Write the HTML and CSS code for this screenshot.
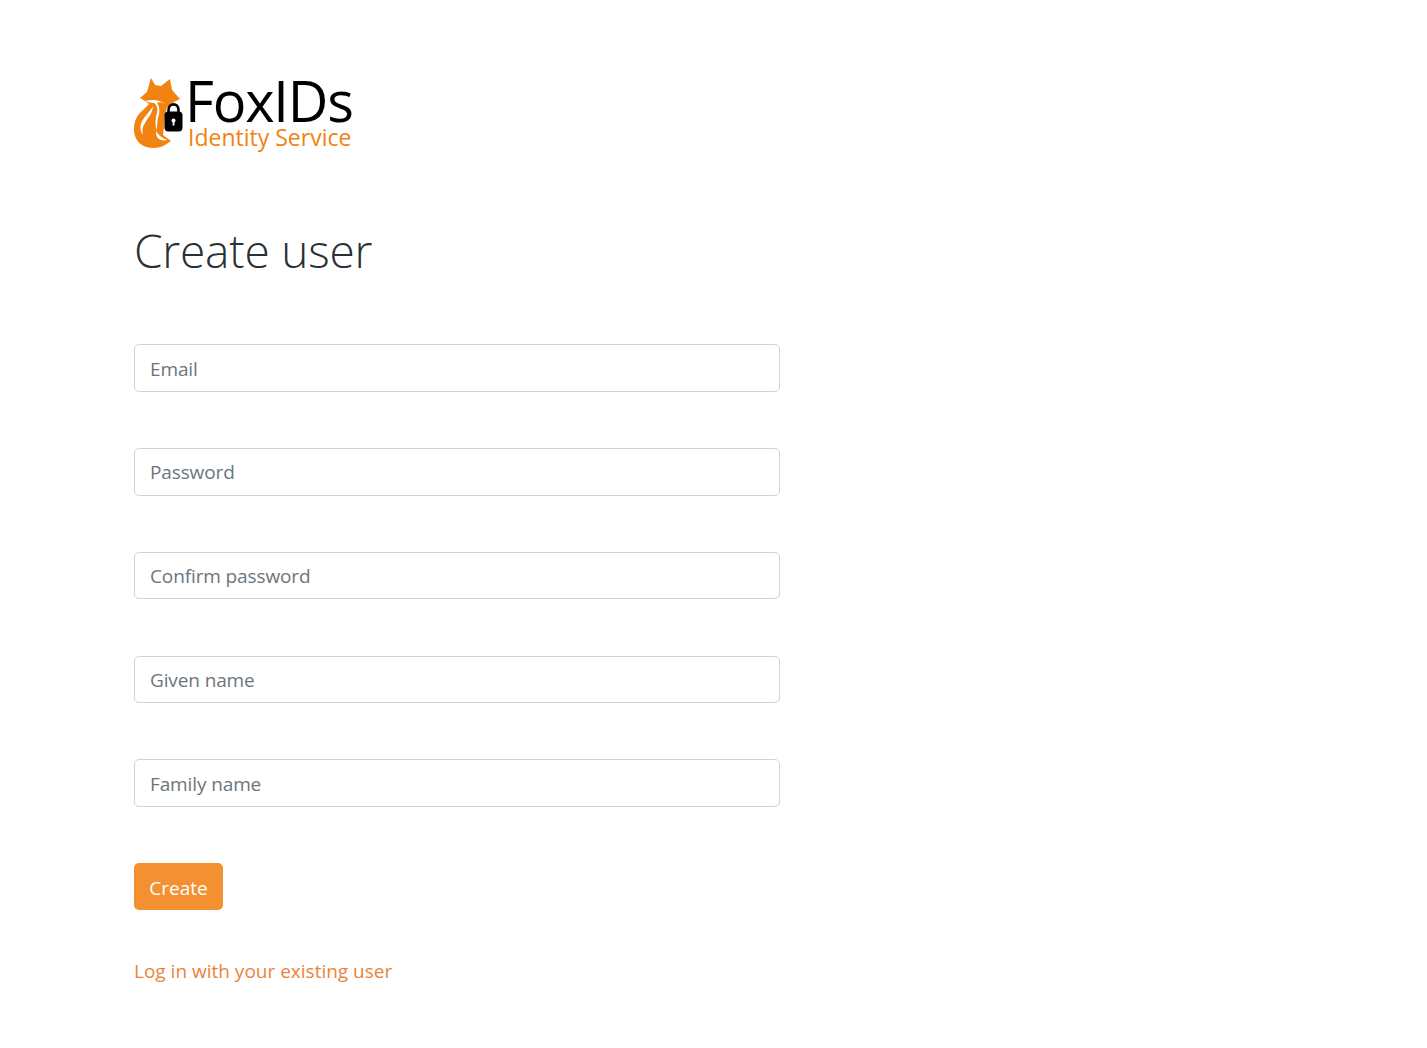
FILE: index.html
```html
<!DOCTYPE html>
<html lang="en">
<head>
 <meta charset="UTF-8">
 <meta name="viewport" content="width=device-width, initial-scale=1.0">
 <title>Create user</title>
 <link rel="stylesheet" href="styles.css">
</head>
<body>
 <div class="container">
 <header class="brand">
 <svg class="brand-icon" viewBox="0 0 50 72" width="50" height="72" aria-hidden="true">
 <path class="fox" d="M17 1 L21 8 L27 9 L36 2 L38 13 L46 22 L38 26 L33 30 L31 38 L30 50 L29 58 L37 64 L31 68 C25 72 14 72 8 68 C2 64 0 58 0 52 C0 44 3 38 9 33 L15 27 L11 24 L6 21 L13 15 Z"/>
 <path class="fox-mark" d="M11 24 C18 22 27 23 31 27 C28 25 25 25 23 26 C26 30 26 36 24 41 C23 46 23 50 23 54 C21 48 21 42 23 36 C24 32 23 28 20 26 C17 26 14 25 11 24 Z"/>
 <path class="fox-mark" d="M19 29 C19 35 14 41 11 46 C8 50 8 54 9 58 C5 53 6 46 10 41 C13 37 17 33 19 29 Z"/>
 <path class="fox-mark" d="M22 54 C24 58 28 61 33 63 C29 64 25 63 23 60 C22 58 22 56 22 54 Z"/>
 <rect class="lock" x="30.5" y="34.5" width="18" height="20" rx="4"/>
 <path class="lock-bar" d="M34.5 36 V33 C34.5 25.5 44.5 25.5 44.5 33 V36"/>
 <circle class="lock-hole" cx="39.5" cy="43.5" r="2"/>
 <rect class="lock-hole" x="38.6" y="43.5" width="1.8" height="5"/>
 </svg>
 <div class="brand-text">
 <div class="brand-name">FoxIDs</div>
 <div class="brand-sub">Identity Service</div>
 </div>
 </header>

 <h1>Create user</h1>

 <form class="user-form">
 <input class="form-input" type="text" placeholder="Email">
 <input class="form-input" type="password" placeholder="Password">
 <input class="form-input" type="password" placeholder="Confirm password">
 <input class="form-input" type="text" placeholder="Given name">
 <input class="form-input" type="text" placeholder="Family name">
 <button class="create-btn" type="button">Create</button>
 </form>

 <a class="login-link" href="#">Log in with your existing user</a>
 </div>
</body>
</html>
```

FILE: styles.css
```css
* {
margin: 0;
padding: 0;
box-sizing: border-box;
}

body {
background: #ffffff;
color: #212529;
font-family: 'Open Sans', 'Noto Sans', sans-serif;
font-size: 19px;
}

.container {
width: 646px;
margin-left: 134px;
padding-top: 77px;
}

.brand {
display: flex;
height: 72px;
}

.brand-icon {
flex-shrink: 0;
margin-right: 1px;
}

.fox {
fill: #f28310;
}

.fox-mark {
fill: #ffffff;
}

.lock {
fill: #000000;
}

.lock-bar {
fill: none;
stroke: #000000;
stroke-width: 2.6;
}

.lock-hole {
fill: #ffffff;
}

.brand-name {
color: #000000;
font-size: 56px;
line-height: 46px;
letter-spacing: -1.2px;
}

.brand-sub {
color: #f28310;
font-size: 23px;
line-height: 26px;
margin-top: 1px;
margin-left: 3px;
}

h1 {
font-size: 46px;
font-weight: 300;
line-height: 60px;
margin-top: 71px;
margin-bottom: 64.25px;
letter-spacing: -0.2px;
color: #2b3035;
}

.user-form {
display: flex;
flex-direction: column;
align-items: flex-start;
gap: 56.25px;
}

.form-input {
display: block;
width: 100%;
height: 47.5px;
padding: 1px 15px 0;
border: 1px solid #ced4da;
border-radius: 5px;
font-family: inherit;
font-size: inherit;
letter-spacing: -0.12px;
color: #495057;
background: #ffffff;
}

.form-input::placeholder {
color: #6c757d;
opacity: 1;
}

.create-btn {
height: 47px;
width: 89px;
padding-top: 3px;
border: none;
border-radius: 5px;
background: #f39132;
color: #ffffff;
font-family: inherit;
font-size: inherit;
cursor: pointer;
}

.login-link {
display: inline-block;
margin-top: 46px;
color: #e9843a;
line-height: 30px;
text-decoration: none;
}
```
